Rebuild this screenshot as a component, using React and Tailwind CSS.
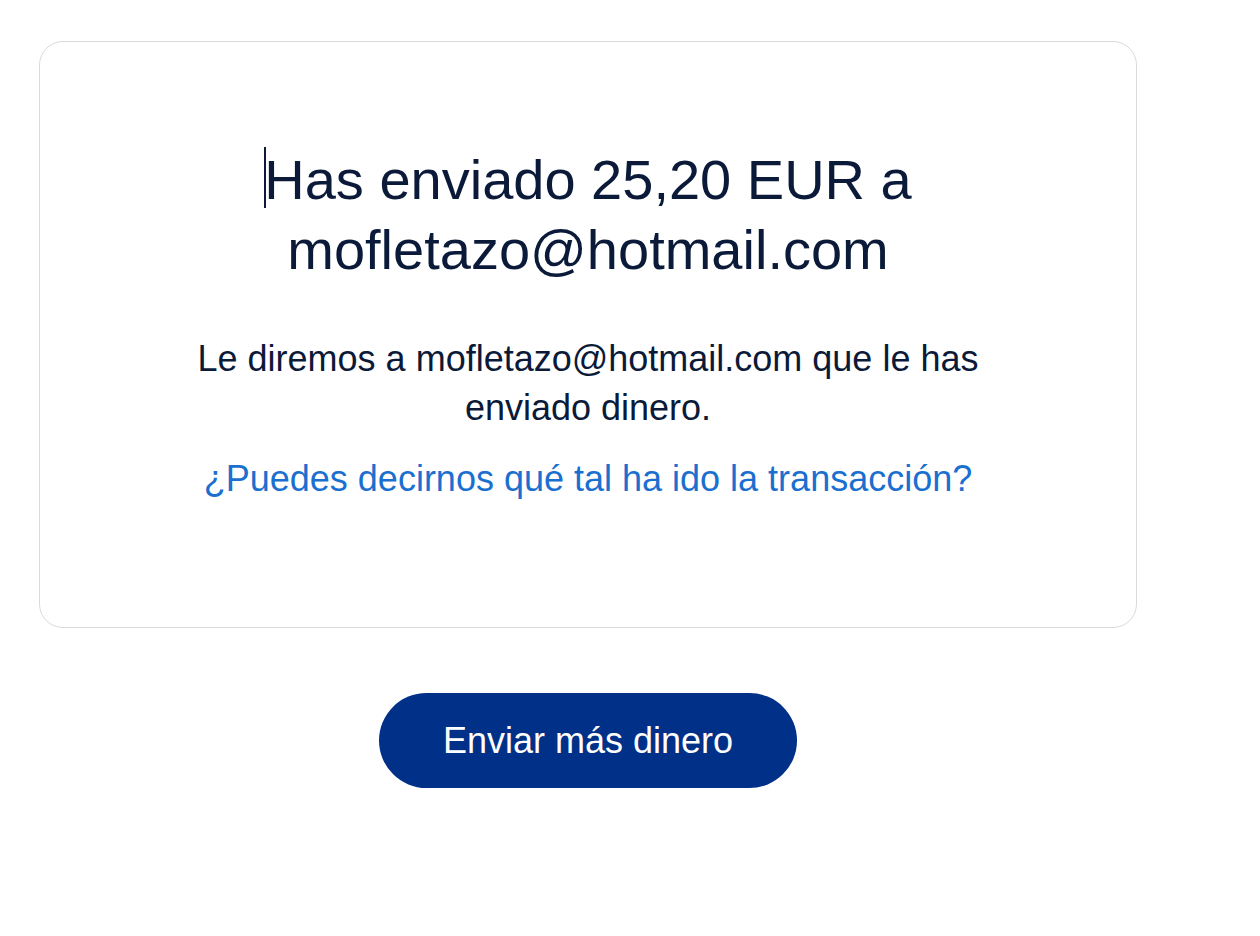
export default function App() {
  return (
    <div className="min-h-screen bg-white pl-[39px] pt-[41px] font-['Liberation_Sans',Arial,sans-serif]">
      <div className="w-[1098px]">
        {/* Confirmation card */}
        <div className="rounded-[24px] border border-[#dadada] px-10 pt-[103px] pb-[124px] flex flex-col items-center text-center">
          <h1 className="text-[56px] leading-[70px] font-normal text-[#0a1a38] max-w-[900px]">
            <span className="inline-block align-top w-[2px] h-[61px] mt-[2px] -mr-[2px] bg-[#0a1a38]" />
            Has enviado 25,20 EUR a mofletazo@hotmail.com
          </h1>
          <p className="mt-[49px] max-w-[820px] text-[36px] leading-[49px] text-[#0a1a38]">
            Le diremos a mofletazo@hotmail.com que le has enviado dinero.
          </p>
          <a href="#" className="mt-[22px] text-[36px] leading-[49px] text-[#1b6fcf]">
            ¿Puedes decirnos qué tal ha ido la transacción?
          </a>
        </div>

        {/* Action */}
        <div className="flex justify-center mt-[65px]">
          <button className="h-[95px] px-[64px] rounded-full bg-[#003087] text-white text-[36px] leading-none">
            Enviar más dinero
          </button>
        </div>
      </div>
    </div>
  )
}
